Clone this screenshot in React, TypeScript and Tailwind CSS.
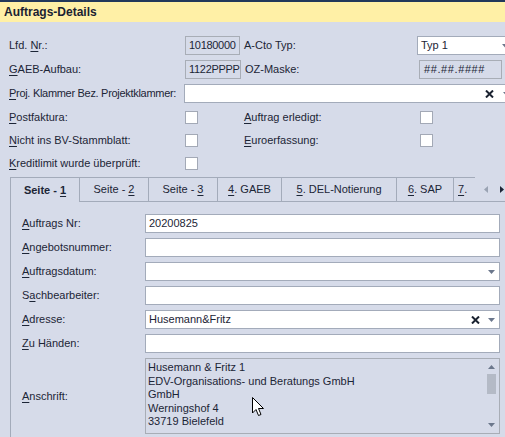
import React from "react";

const BG = "bg-[#d6dbe9]";

function Arrow({ color = "#6b778c" }: { color?: string }) {
  return (
    <svg width="7" height="4" viewBox="0 0 7 4" className="shrink-0">
      <path d="M0 0 H7 L3.5 4 Z" fill={color} />
    </svg>
  );
}

function Cross() {
  return (
    <svg width="9" height="8" viewBox="0 0 9 8" className="shrink-0">
      <path d="M1 0.5 L8 7.5 M8 0.5 L1 7.5" stroke="#1a2230" strokeWidth="2" />
    </svg>
  );
}

function Check() {
  return <div className="w-[13px] h-[13px] bg-white border border-[#a3a9b6] shrink-0" />;
}

function L({ pre = "", u, post }: { pre?: string; u: string; post: string }) {
  return (
    <span>
      {pre}
      <span className="underline underline-offset-[2px]">{u}</span>
      {post}
    </span>
  );
}

function Input({
  text = "",
  cross = false,
  arrow = false,
}: {
  text?: string;
  cross?: boolean;
  arrow?: boolean;
}) {
  return (
    <div className="w-[355px] h-[19px] bg-white border border-[#a3abba] flex items-center pl-[3px] pr-[4px]">
      <span className="flex-1 whitespace-nowrap">{text}</span>
      {cross && (
        <span className="mr-[8px] flex items-center">
          <Cross />
        </span>
      )}
      {arrow && <Arrow />}
    </div>
  );
}

function FormRow({ label, children }: { label: React.ReactNode; children: React.ReactNode }) {
  return (
    <div className="flex items-center h-[19px] mb-[5px]">
      <div className="w-[123px] shrink-0 whitespace-nowrap">{label}</div>
      {children}
    </div>
  );
}

const tabs: { w: number; label: React.ReactNode }[] = [
  { w: 70, label: <L pre="Seite - " u="1" post="" /> },
  { w: 69, label: <L pre="Seite - " u="2" post="" /> },
  { w: 69, label: <L pre="Seite - " u="3" post="" /> },
  { w: 64, label: <L u="4" post=". GAEB" /> },
  { w: 115, label: <L u="5" post=". DEL-Notierung" /> },
  { w: 57, label: <L u="6" post=". SAP" /> },
];

export default function App() {
  return (
    <div
      className={`relative w-[505px] h-[437px] overflow-hidden ${BG} text-[11px] text-[#1c2536] leading-none`}
      style={{ fontFamily: '"Liberation Sans", Arial, sans-serif' }}
    >
      {/* Header */}
      <div className="border-t-2 border-[#22385a] h-[22px] bg-[#fff0a6] flex items-center pl-[4px] text-[12px] font-bold text-[#1a2232]">
        Auftrags-Details
      </div>

      {/* Top form */}
      <div className="pl-[9px] pt-[14px]">
        <div className="flex items-center h-[19px]">
          <div className="w-[176px] shrink-0 whitespace-nowrap">
            <L pre="Lfd. " u="N" post="r.:" />
          </div>
          <div className="w-[55px] h-[19px] border border-[#a8adb6] flex items-center pl-[3px] tracking-[-0.3px] whitespace-nowrap shrink-0">
            10180000
          </div>
          <div className="w-[173px] shrink-0 ml-[4px] whitespace-nowrap">A-Cto Typ:</div>
          <div className="w-[96px] h-[19px] bg-white border border-[#a3abba] flex items-center pl-[3px] pr-[3px] shrink-0">
            <span className="flex-1">Typ 1</span>
            <Arrow />
          </div>
        </div>
        <div className="flex items-center h-[19px] mt-[5px]">
          <div className="w-[176px] shrink-0 whitespace-nowrap">
            <L u="G" post="AEB-Aufbau:" />
          </div>
          <div className="w-[56px] h-[19px] border border-[#a8adb6] flex items-center pl-[3px] tracking-[-0.3px] whitespace-nowrap shrink-0">
            1122PPPP
          </div>
          <div className="w-[174px] shrink-0 ml-[4px] whitespace-nowrap">OZ-Maske:</div>
          <div className="w-[83px] h-[19px] border border-[#a8adb6] flex items-center pl-[4px] tracking-[0.6px] shrink-0 whitespace-nowrap">
            ##.##.####
          </div>
        </div>
        <div className="flex items-center h-[19px] mt-[5px]">
          <div className="w-[175px] shrink-0 whitespace-nowrap tracking-[-0.3px]">
            <L u="P" post="roj. Klammer Bez. Projektklammer:" />
          </div>
          <div className="w-[330px] h-[19px] bg-white border border-[#a3abba] flex items-center pr-[3px] shrink-0">
            <span className="flex-1" />
            <span className="mr-[9px] flex items-center">
              <Cross />
            </span>
            <Arrow />
          </div>
        </div>
        <div className="flex items-center h-[13px] mt-[8px]">
          <div className="w-[176px] shrink-0 whitespace-nowrap">
            <L u="P" post="ostfaktura:" />
          </div>
          <Check />
          <div className="w-[176px] shrink-0 ml-[46px] whitespace-nowrap">
            <L u="A" post="uftrag erledigt:" />
          </div>
          <Check />
        </div>
        <div className="flex items-center h-[13px] mt-[10px]">
          <div className="w-[176px] shrink-0 whitespace-nowrap">
            <L u="N" post="icht ins BV-Stammblatt:" />
          </div>
          <Check />
          <div className="w-[176px] shrink-0 ml-[46px] whitespace-nowrap">
            <L u="E" post="uroerfassung:" />
          </div>
          <Check />
        </div>
        <div className="flex items-center h-[13px] mt-[10px]">
          <div className="w-[176px] shrink-0 whitespace-nowrap">
            <L u="K" post="reditlimit wurde überprüft:" />
          </div>
          <Check />
        </div>
      </div>

      {/* Tabs */}
      <div className="flex mt-[7px] ml-[10px] h-[25px]">
        {tabs.map((t, i) => (
          <div
            key={i}
            style={{ width: t.w }}
            className={`shrink-0 flex items-center justify-center whitespace-nowrap border-t border-r border-[#a3abba] ${
              i === 0 ? "border-l font-bold" : "border-b"
            }`}
          >
            {t.label}
          </div>
        ))}
        <div className="w-[21px] shrink-0 border-t border-b border-[#a3abba] flex items-center pl-[4px] whitespace-nowrap">
          <L u="7" post="." />
        </div>
        <div className="flex-1 border-b border-[#a3abba] flex items-center justify-end gap-[12px] pr-[1px]">
          <svg width="4" height="7" viewBox="0 0 4 7">
            <path d="M4 0 V7 L0 3.5 Z" fill="#9aa3b3" />
          </svg>
          <svg width="4" height="7" viewBox="0 0 4 7">
            <path d="M0 0 V7 L4 3.5 Z" fill="#1c2536" />
          </svg>
        </div>
      </div>

      {/* Panel */}
      <div className="ml-[10px] border-l border-[#a3abba] h-[300px] pl-[11px] pt-[12px]">
        <FormRow label={<L u="A" post="uftrags Nr:" />}>
          <Input text="20200825" />
        </FormRow>
        <FormRow label={<L u="A" post="ngebotsnummer:" />}>
          <Input />
        </FormRow>
        <FormRow label={<L u="A" post="uftragsdatum:" />}>
          <Input arrow />
        </FormRow>
        <FormRow label={<L pre="S" u="a" post="chbearbeiter:" />}>
          <Input />
        </FormRow>
        <FormRow label={<L u="A" post="dresse:" />}>
          <Input text="Husemann&Fritz" cross arrow />
        </FormRow>
        <FormRow label={<L u="Z" post="u Händen:" />}>
          <Input />
        </FormRow>
        <div className="flex items-center h-[76px]">
          <div className="w-[123px] shrink-0">
            <L u="A" post="nschrift:" />
          </div>
          <div className="w-[355px] h-[76px] border border-[#a8adb6] flex">
            <div className="flex-1 pl-[2px] pt-[2px] leading-[13.6px] whitespace-nowrap">
              <div>Husemann &amp; Fritz 1</div>
              <div>EDV-Organisations- und Beratungs GmbH</div>
              <div>GmbH</div>
              <div>Werningshof 4</div>
              <div>33719 Bielefeld</div>
            </div>
            <div className="w-[14px] mr-[1px] flex flex-col items-center pt-[6px] pb-[6px]">
              <svg width="7" height="4" viewBox="0 0 7 4">
                <path d="M0 4 H7 L3.5 0 Z" fill="#6b778c" />
              </svg>
              <div className="w-[9px] h-[20px] bg-[#b4bac6] mt-[5px]" />
              <div className="flex-1" />
              <Arrow />
            </div>
          </div>
        </div>
      </div>

      {/* Mouse cursor */}
      <svg
        className="absolute left-[252px] top-[397px]"
        width="13"
        height="20"
        viewBox="0 0 13 20"
      >
        <path
          d="M0.5 0.5 V16 L4 12.5 L6.5 18.5 L9 17.5 L6.5 11.5 H11.5 Z"
          fill="#ffffff"
          stroke="#000000"
          strokeWidth="1"
          strokeLinejoin="miter"
        />
      </svg>
    </div>
  );
}
